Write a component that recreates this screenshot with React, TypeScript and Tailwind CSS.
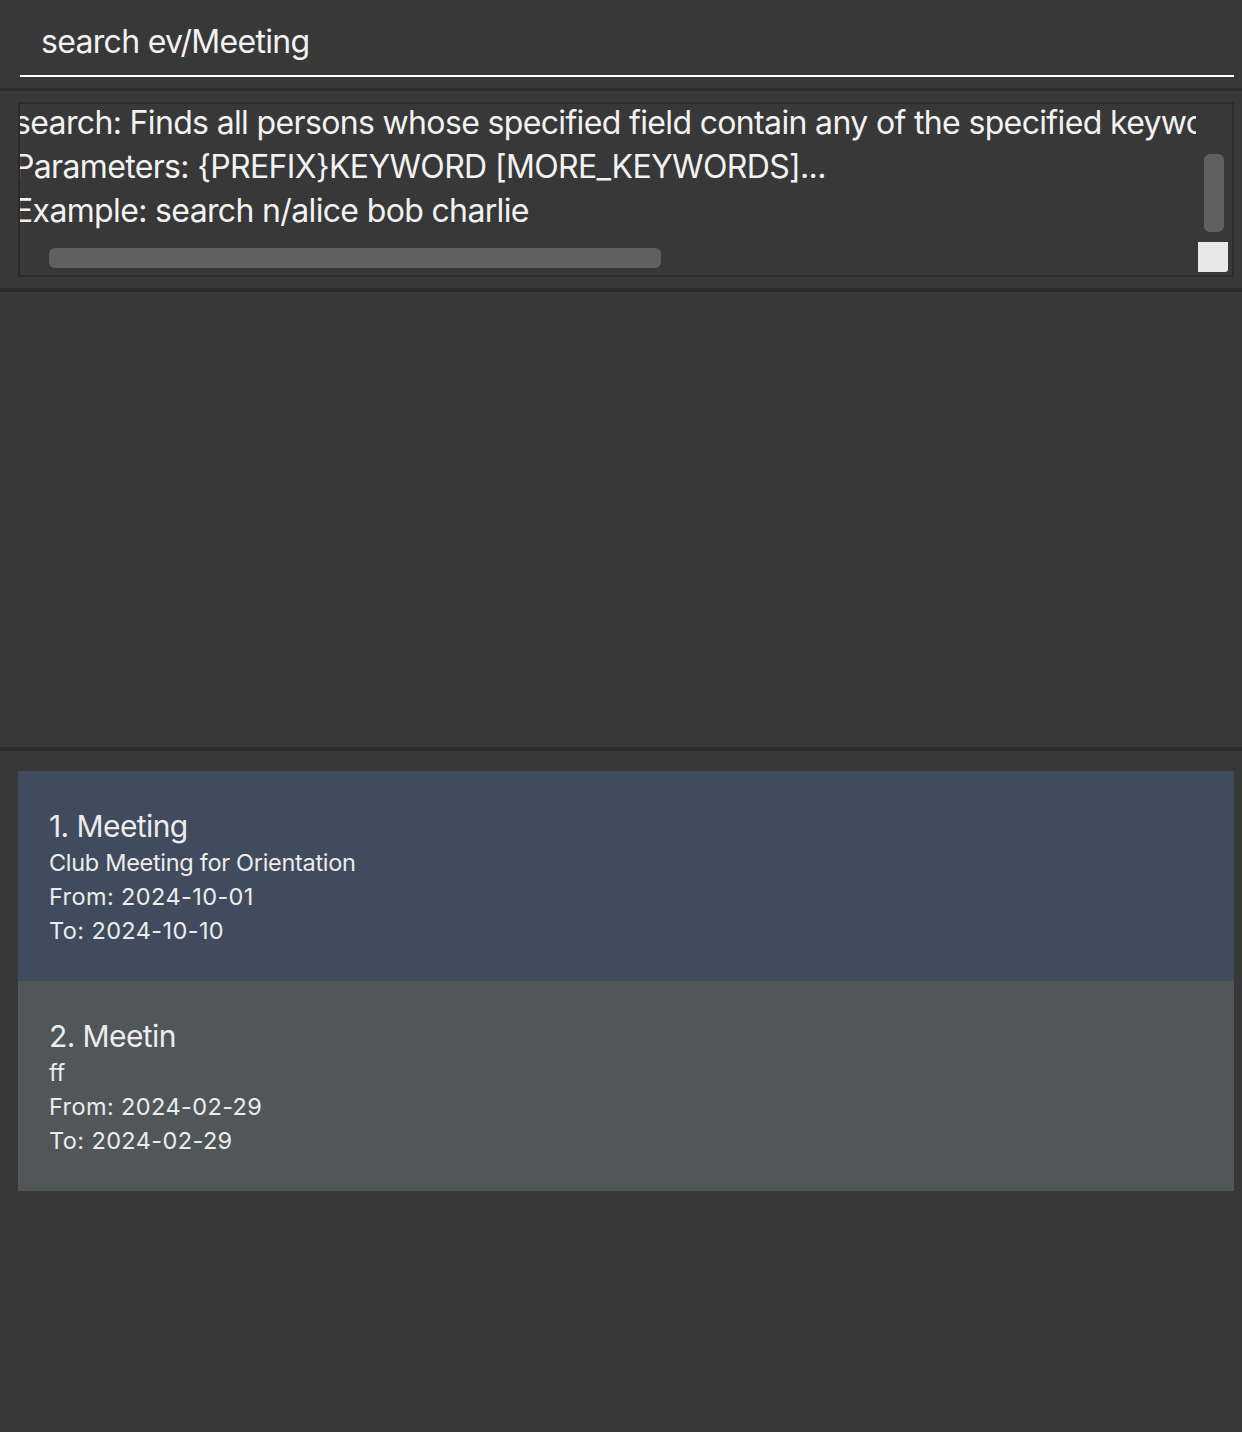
import React from 'react';

interface EventItem {
  title: string;
  desc: string;
  from: string;
  to: string;
}

const events: EventItem[] = [
  { title: 'Meeting', desc: 'Club Meeting for Orientation', from: '2024-10-01', to: '2024-10-10' },
  { title: 'Meetin', desc: 'ff', from: '2024-02-29', to: '2024-02-29' },
];

function EventCard({ item, index, selected }: { item: EventItem; index: number; selected: boolean }) {
  return (
    <div
      className={`h-[210px] pl-[31px] pt-[35px] text-[#ececec] ${selected ? 'bg-[#404b5d]' : 'bg-[#515659]'}`}
    >
      <div className="text-[30px] leading-[40px] tracking-[-0.6px]">
        {index + 1}. {item.title}
      </div>
      <div className="text-[23.5px] leading-[34px] tracking-[-0.3px]">{item.desc}</div>
      <div className="text-[23.5px] leading-[34px] tracking-[0.4px]">From: {item.from}</div>
      <div className="text-[23.5px] leading-[34px] tracking-[0.4px]">To: {item.to}</div>
    </div>
  );
}

export default function App() {
  return (
    <div className="flex h-[1432px] w-[1242px] flex-col bg-[#383838] font-['Inter',sans-serif] text-white">
      {/* command box */}
      <div className="pl-[20px] pr-[8px]">
        <div className="flex h-[77px] items-center border-b-2 border-white pl-[21px] pt-[8px] text-[32px] tracking-[-0.7px] text-[#f2f2f2]">
          search ev/Meeting
        </div>
      </div>
      <div className="mt-[11px] h-[3px] bg-[#2b2b2b]" />

      {/* result display */}
      <div className="px-[18px] pt-[11px] pb-[11px] pr-[8px]">
        <div className="relative h-[175px] overflow-hidden border-2 border-[#2b2b2b]">
          <div className="-ml-[6px] -mt-[3px] whitespace-nowrap text-[32px] leading-[44px] tracking-[-0.65px] text-[#f2f2f2]">
            <div>search: Finds all persons whose specified field contain any of the specified keywords</div>
            <div>Parameters: {'{PREFIX}'}KEYWORD [MORE_KEYWORDS]...</div>
            <div>Example: search n/alice bob charlie</div>
          </div>
          <div className="absolute right-0 top-0 h-full w-[36px] bg-[#383838]" />
          <div className="absolute left-[29px] top-[144px] h-[20px] w-[612px] rounded-[6px] bg-[#606060]" />
          <div className="absolute left-[1184px] top-[50px] h-[78px] w-[20px] rounded-[6px] bg-[#606060]" />
          <div className="absolute left-[1178px] top-[138px] h-[30px] w-[30px] rounded-br-[3px] bg-[#e8e8e8]" />
        </div>
      </div>
      <div className="h-[4px] bg-[#2b2b2b]" />

      <div className="h-[455px]" />
      <div className="h-[4px] bg-[#2b2b2b]" />

      {/* event list */}
      <div className="pl-[18px] pr-[8px] pt-[20px]">
        {events.map((ev, i) => (
          <EventCard key={i} item={ev} index={i} selected={i === 0} />
        ))}
      </div>
    </div>
  );
}
